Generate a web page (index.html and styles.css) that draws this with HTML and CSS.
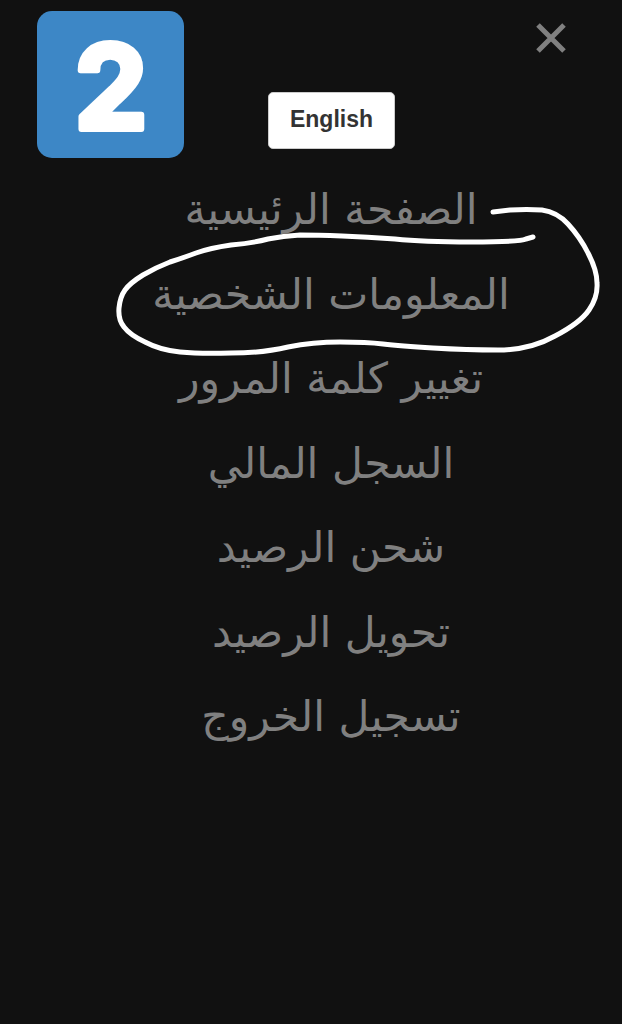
FILE: index.html
```html
<!DOCTYPE html>
<html lang="ar">
<head>
<meta charset="utf-8">
<title>القائمة</title>
<link rel="stylesheet" href="styles.css">
</head>
<body>
<div class="page">
  <header class="top">
    <svg class="badge" viewBox="0 0 147 147" width="147" height="147"><text class="digit" x="74" y="118" text-anchor="middle">2</text></svg>
    <button class="lang">English</button>
    <svg class="close" viewBox="0 0 32 32" width="32" height="32"><path d="M3 3 L29 29 M29 3 L3 29" stroke="#808080" stroke-width="5" fill="none"/></svg>
  </header>
  <nav class="menu" dir="rtl">
    <a>الصفحة الرئيسية</a>
    <a>المعلومات الشخصية</a>
    <a>تغيير كلمة المرور</a>
    <a>السجل المالي</a>
    <a>شحن الرصيد</a>
    <a>تحويل الرصيد</a>
    <a>تسجيل الخروج</a>
  </nav>
  <svg class="scribble" viewBox="0 0 622 1024" width="622" height="1024"><path d="M493 212 L510 210 Q527 209 542 210 Q557 212 568 224 Q580 237 588 253 Q597 270 597 283 Q598 297 589 310 Q580 323 555 336 Q530 350 498 350 Q467 350 433 348 Q400 346 383 344 Q367 342 340 342 Q313 342 288 347 Q263 353 231 353 Q200 354 180 352 Q160 350 145 342 Q130 335 124 327 Q118 320 119 308 Q120 297 125 290 Q130 283 143 275 Q157 267 170 262 Q183 258 196 253 Q210 248 231 245 Q253 243 268 239 Q283 236 300 235 Q317 235 342 236 Q367 237 395 239 Q423 242 471 242 Q520 242 526 239 L533 237" stroke="#fff" stroke-width="5" fill="none" stroke-linecap="round" stroke-linejoin="round"/></svg>
</div>
</body>
</html>
```
FILE: styles.css
```css
html, body { margin: 0; padding: 0; background: #111; }
.page { position: relative; width: 622px; height: 1024px; overflow: hidden; background: #111; font-family: "DejaVu Sans", "Noto Sans", sans-serif; }
.top { display: flex; align-items: flex-start; height: 180px; padding: 11px 0 0 37px; box-sizing: border-box; }
.badge { flex: none; border-radius: 15px; background: #3d87c6; }
.digit { font: 700 116px "Inter", sans-serif; fill: #fff; stroke: #fff; stroke-width: 6px; stroke-linejoin: round; stroke-linecap: round; }
.lang { margin: 81px 0 0 84px; width: 127px; height: 57px; padding: 0 0 3px; background: #fff; border: 1px solid #ccc; border-radius: 5px; color: #333; font: 700 23px "Liberation Sans", sans-serif; }
.close { margin: 11px 0 0 140px; }
.menu { display: flex; flex-direction: column; align-items: center; padding-right: 0; padding-left: 40px; }
.menu a { height: 84.5px; line-height: 60px; font-size: 42.5px; color: #808080; }
.scribble { position: absolute; left: 0; top: 0; pointer-events: none; }
```
